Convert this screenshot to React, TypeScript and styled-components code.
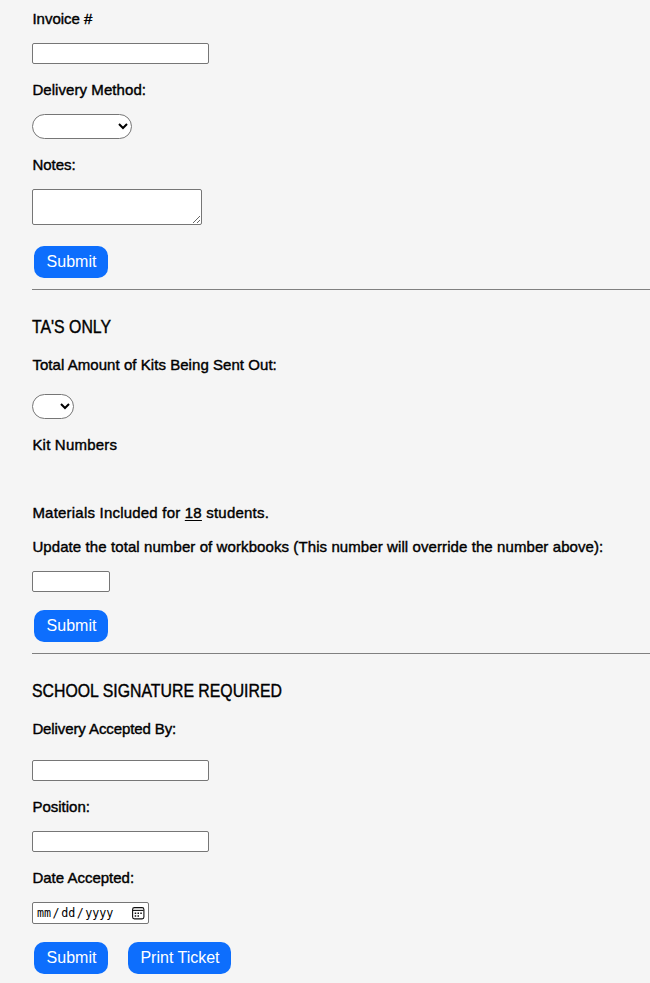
import React from "react";
import styled, { createGlobalStyle } from "styled-components";

const GlobalStyle = createGlobalStyle`
  body {
    margin: 0;
    background: #f5f5f5;
    color: #000;
    font-family: "Franklin Gothic Medium", "Liberation Sans", Arial, sans-serif;
    overflow: hidden;
  }
  * { box-sizing: border-box; }
`;

const Page = styled.main`
  height: 983px;
  padding-left: 32px;
  overflow: hidden;
`;

const Section = styled.section<{ $height: number; $top: number }>`
  display: flex;
  flex-direction: column;
  align-items: flex-start;
  height: ${(p) => p.$height}px;
  padding-top: ${(p) => p.$top}px;
  border-bottom: 1px solid #808080;

  &:last-child { border-bottom: 0; }
`;

const Heading = styled.h2`
  margin: 0 0 18px;
  font-size: 18px;
  font-weight: 400;
  line-height: 20px;
  white-space: nowrap;
  transform: scaleX(0.88);
  transform-origin: left;
  -webkit-text-stroke: 0.4px #000;
`;

const Label = styled.label<{ $tracking?: number; $gap?: number }>`
  display: block;
  margin-bottom: ${(p) => p.$gap ?? 14}px;
  padding-left: 0.4px;
  font-size: 15px;
  line-height: 20px;
  letter-spacing: ${(p) => p.$tracking ?? 0}px;
  white-space: nowrap;
  -webkit-text-stroke: 0.4px #000;
`;

const Count = styled.u`
  text-underline-offset: 2px;
  text-decoration-thickness: 1px;
`;

const TextInput = styled.input<{ $width?: number; $gap?: number }>`
  width: ${(p) => p.$width ?? 177}px;
  height: 21px;
  margin: 0 0 ${(p) => p.$gap ?? 16}px;
  padding: 1px 2px;
  border: 1px solid #767676;
  border-radius: 2px;
  background: #fff;
  outline: 0;
`;

const Select = styled.select<{ $width: number }>`
  width: ${(p) => p.$width}px;
  height: 25px;
  margin: 0 0 16px;
  border: 1px solid #767676;
  border-radius: 13px;
  background: #fff;
  color: #000;
  padding: 0 3px 0 2px;
`;

const Notes = styled.textarea`
  width: 170px;
  height: 36px;
  margin: 0 0 21px;
  border: 1px solid #767676;
  border-radius: 2px;
  background: #fff;
  outline: 0;
`;

const DateField = styled.div`
  display: flex;
  align-items: center;
  width: 117px;
  height: 22px;
  margin-bottom: 18px;
  padding: 0 3px 0 4px;
  border: 1px solid #767676;
  border-radius: 2px;
  background: #fff;
  font: 11.7px/20px "DejaVu Sans Mono", monospace;

  svg { margin-left: auto; }
`;

const Slash = styled.span`
  margin: 0 1.5px;
`;

const Actions = styled.div`
  display: flex;
  gap: 20px;
  margin-left: 2px;
`;

const Button = styled.button<{ $width: number }>`
  width: ${(p) => p.$width}px;
  height: 32px;
  padding: 0 0 1px 1px;
  border: 0;
  border-radius: 10px;
  background: #0d6efd;
  color: #fff;
  font: 16px/20px "Liberation Sans", Arial, sans-serif;
  white-space: nowrap;
`;

const CalendarIcon = () => (
  <svg width="13" height="13" viewBox="0 0 13 13" fill="none">
    <rect x="0.6" y="0.6" width="11.3" height="11.3" rx="1.8" stroke="#111" strokeWidth="1.1" />
    <path d="M1 3.4h10.5" stroke="#111" strokeWidth="1.1" />
    <path d="M2.7 6.3h1.5M5.5 6.3h1.5M8.3 6.3h1.5M2.7 9h1.5M5.5 9h1.5" stroke="#111" strokeWidth="1.4" />
  </svg>
);

export default function App() {
  return (
    <>
      <GlobalStyle />
      <Page>
        <Section $top={9} $height={290}>
          <Label>Invoice #</Label>
          <TextInput />
          <Label $tracking={0.07}>Delivery Method:</Label>
          <Select $width={100} />
          <Label>Notes:</Label>
          <Notes />
          <Actions><Button $width={74}>Submit</Button></Actions>
        </Section>

        <Section $top={27} $height={364}>
          <Heading>TA'S ONLY</Heading>
          <Label $gap={19} $tracking={0.05}>Total Amount of Kits Being Sent Out:</Label>
          <Select $width={42} />
          <Label $gap={48} $tracking={0.2}>Kit Numbers</Label>
          <Label $tracking={0.21}>Materials Included for <Count>18</Count> students.</Label>
          <Label $tracking={0.09}>Update the total number of workbooks (This number will override the number above):</Label>
          <TextInput $width={78} $gap={18} />
          <Actions><Button $width={74}>Submit</Button></Actions>
        </Section>

        <Section $top={27} $height={329}>
          <Heading>SCHOOL SIGNATURE REQUIRED</Heading>
          <Label $gap={21} $tracking={-0.1}>Delivery Accepted By:</Label>
          <TextInput />
          <Label>Position:</Label>
          <TextInput />
          <Label>Date Accepted:</Label>
          <DateField>
            mm<Slash>/</Slash>dd<Slash>/</Slash>yyyy
            <CalendarIcon />
          </DateField>
          <Actions>
            <Button $width={74}>Submit</Button>
            <Button $width={103}>Print Ticket</Button>
          </Actions>
        </Section>
      </Page>
    </>
  );
}
